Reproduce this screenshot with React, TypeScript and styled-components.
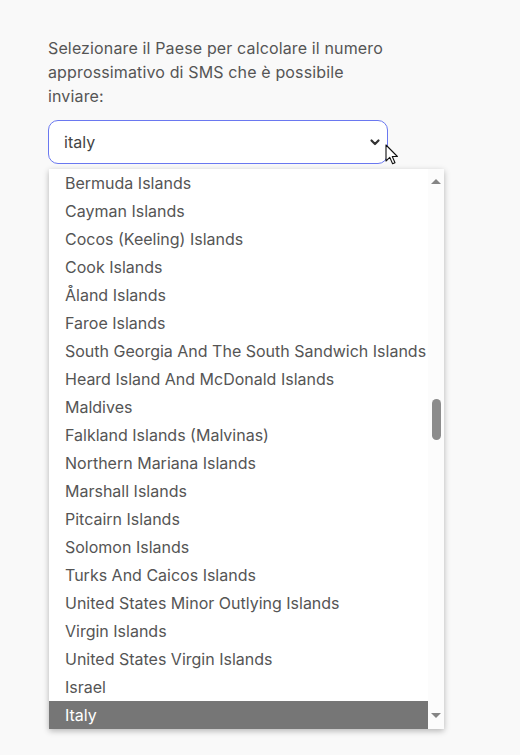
import styled, { createGlobalStyle } from "styled-components";

const countries = [
  "Bermuda Islands",
  "Cayman Islands",
  "Cocos (Keeling) Islands",
  "Cook Islands",
  "Åland Islands",
  "Faroe Islands",
  "South Georgia And The South Sandwich Islands",
  "Heard Island And McDonald Islands",
  "Maldives",
  "Falkland Islands (Malvinas)",
  "Northern Mariana Islands",
  "Marshall Islands",
  "Pitcairn Islands",
  "Solomon Islands",
  "Turks And Caicos Islands",
  "United States Minor Outlying Islands",
  "Virgin Islands",
  "United States Virgin Islands",
  "Israel",
  "Italy",
];

// scroll position of the open list (px from top of track)
const thumbOffset = 215;

const GlobalStyle = createGlobalStyle`
  html, body {
    margin: 0;
    background: #f9f9f9;
    font-family: Inter, "Noto Sans", sans-serif;
  }
`;

const Page = styled.div`
  min-height: 755px;
  padding: 36px 0 0 48px;
  box-sizing: border-box;
`;

const Label = styled.p`
  margin: 0 0 12px;
  width: 345px;
  font-size: 16px;
  line-height: 24px;
  letter-spacing: 0.14px;
  color: #555;
`;

const Field = styled.div`
  position: relative;
  width: 340px;
`;

const SelectBox = styled.div`
  display: flex;
  align-items: center;
  justify-content: space-between;
  height: 44px;
  box-sizing: border-box;
  padding: 0 6px 0 15px;
  border: 1px solid #6a78f0;
  border-radius: 10px;
  background: #fff;
  font-size: 16px;
  color: #444;
`;

const Cursor = styled.svg`
  position: absolute;
  left: 337px;
  top: 24px;
`;

const List = styled.div`
  position: absolute;
  left: 1px;
  top: 49px;
  width: 395px;
  display: flex;
  background: #fff;
  box-shadow: 0 2px 6px rgba(0, 0, 0, 0.28);
`;

const Options = styled.ul`
  flex: 1;
  margin: 0;
  padding: 0;
  list-style: none;
`;

const Option = styled.li<{ $selected?: boolean }>`
  height: 28px;
  line-height: 28px;
  padding-left: 16px;
  font-size: 16px;
  white-space: nowrap;
  color: ${(p) => (p.$selected ? "#fff" : "#555")};
  background: ${(p) => (p.$selected ? "#767676" : "transparent")};
`;

const Scrollbar = styled.div`
  width: 16px;
  display: flex;
  flex-direction: column;
  align-items: center;
  padding: 10px 0 11px;
  box-sizing: border-box;
  background: #fcfcfc;
`;

const Track = styled.div`
  flex: 1;
  display: flex;
  flex-direction: column;
  align-items: center;
`;

const Arrow = styled.div<{ $down?: boolean }>`
  width: 0;
  height: 0;
  border-left: 5px solid transparent;
  border-right: 5px solid transparent;
  ${(p) => (p.$down ? "border-top: 5px solid #858585;" : "border-bottom: 5px solid #858585;")}
`;

const Thumb = styled.div`
  width: 9px;
  height: 41px;
  border-radius: 5px;
  background: #8c8c8c;
`;

export default function App() {
  return (
    <>
      <GlobalStyle />
      <Page>
        <Label>Selezionare il Paese per calcolare il numero approssimativo di SMS che è possibile inviare:</Label>
        <Field>
          <SelectBox>
            <span>italy</span>
            <svg width="12" height="12" viewBox="0 0 12 12">
              <path d="M2.5 4.5 L6 8 L9.5 4.5" fill="none" stroke="#333" strokeWidth="2.2" strokeLinecap="round" strokeLinejoin="round" />
            </svg>
          </SelectBox>
          <Cursor width="14" height="22" viewBox="0 0 14 22">
            <path d="M1 1 L1 17 L4.8 13.4 L7.6 19.8 L10 18.8 L7.3 12.5 L12.4 12.5 Z" fill="#fff" stroke="#111" strokeWidth="1.1" strokeLinejoin="round" />
          </Cursor>
          <List>
            <Options>
              {countries.map((c) => (
                <Option key={c} $selected={c === "Italy"}>
                  {c}
                </Option>
              ))}
            </Options>
            <Scrollbar>
              <Arrow />
              <Track>
                <Thumb style={{ marginTop: thumbOffset }} />
              </Track>
              <Arrow $down />
            </Scrollbar>
          </List>
        </Field>
      </Page>
    </>
  );
}
